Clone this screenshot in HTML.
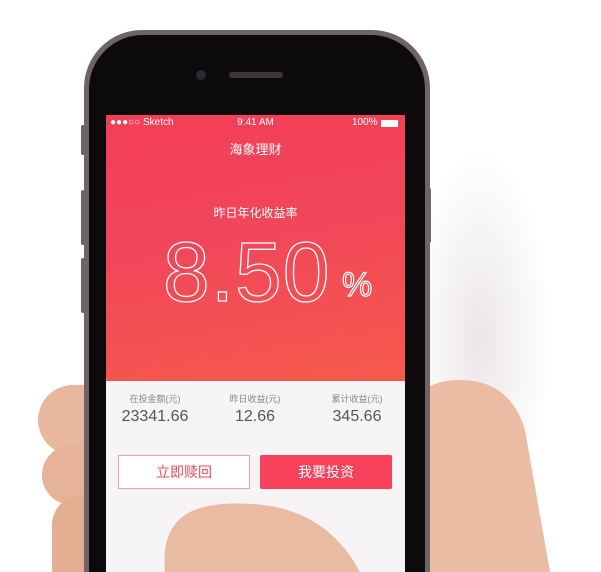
<!DOCTYPE html>
<html><head><meta charset="utf-8"><style>
*{margin:0;padding:0;box-sizing:border-box}
html,body{width:601px;height:572px;overflow:hidden}
body{background:#fff;font-family:"Liberation Sans","Noto Sans CJK SC",sans-serif}
#w{position:relative;width:601px;height:572px;overflow:hidden}
.abs{position:absolute}
.cn{font-family:"Liberation Sans","Noto Sans CJK SC",sans-serif}
</style></head><body><div id="w">
<div class="abs" style="left:420px;top:150px;width:181px;height:380px;background:radial-gradient(ellipse 70px 190px at 60px 190px,#ebe6e8,#fff)"></div>
<div class="abs" style="left:38px;top:385px;width:100px;height:70px;border-radius:35px;background:#e8b79e"></div>
<div class="abs" style="left:42px;top:445px;width:95px;height:60px;border-radius:30px;background:#e6b399"></div>
<div class="abs" style="left:52px;top:495px;width:90px;height:77px;border-radius:30px 30px 0 0;background:#e4ae93"></div>
<svg class="abs" style="left:400px;top:370px" width="160" height="202"><path d="M10 202 L10 40 Q20 10 60 10 Q110 10 125 60 L150 202 Z" fill="#ebbca3"/></svg>
<div class="abs" style="left:84px;top:30px;width:346px;height:542px;border-radius:58px 58px 0 0;background:#6e6468"></div>
<div class="abs" style="left:89px;top:35px;width:336px;height:537px;border-radius:54px 54px 0 0;background:#0c0a0b"></div>
<div class="abs" style="left:81px;top:125px;width:4px;height:30px;background:#6e6468;border-radius:2px"></div>
<div class="abs" style="left:81px;top:190px;width:4px;height:55px;background:#6e6468;border-radius:2px"></div>
<div class="abs" style="left:81px;top:258px;width:4px;height:55px;background:#6e6468;border-radius:2px"></div>
<div class="abs" style="left:427px;top:188px;width:4px;height:55px;background:#6e6468;border-radius:2px"></div>
<div class="abs" style="left:196px;top:70px;width:10px;height:10px;border-radius:50%;background:#2a2a35"></div>
<div class="abs" style="left:229px;top:72px;width:54px;height:6px;border-radius:3px;background:#3a3638"></div>
<div class="abs" style="left:106px;top:115px;width:299px;height:266px;background:linear-gradient(170deg,#f33e58 0%,#f2465a 45%,#f65a4c 100%)"></div>
<div class="abs" style="left:106px;top:381px;width:299px;height:191px;background:#f6f4f5"></div>
<div class="abs" style="left:110px;top:117px;font-size:10px;color:#fff">●●●○○ Sketch</div>
<div class="abs" style="left:106px;top:117px;width:299px;text-align:center;font-size:10px;color:#fff">9:41 AM</div>
<div class="abs" style="left:352px;top:117px;font-size:10px;color:#fff">100%</div>
<div class="abs" style="left:381px;top:120px;width:17px;height:7px;background:#fff"></div>
<div class="abs cn" style="left:106px;top:139px;width:299px;text-align:center;font-size:13px;color:#fff">海象理财</div>
<div class="abs cn" style="left:106px;top:204px;width:299px;text-align:center;font-size:12px;color:#fff">昨日年化收益率</div>
<div class="abs" style="left:163px;top:230px;font-size:84px;color:transparent;-webkit-text-stroke:1.3px #fff;letter-spacing:1px;line-height:1">8.50</div>
<div class="abs" style="left:342px;top:266px;font-size:34px;color:transparent;-webkit-text-stroke:1.2px #fff">%</div>
<div class="abs cn" style="left:110px;top:392px;width:90px;text-align:center;font-size:9px;color:#888;line-height:14px">在投金额(元)</div>
<div class="abs cn" style="left:210px;top:392px;width:90px;text-align:center;font-size:9px;color:#888;line-height:14px">昨日收益(元)</div>
<div class="abs cn" style="left:312px;top:392px;width:90px;text-align:center;font-size:9px;color:#888;line-height:14px">累计收益(元)</div>
<div class="abs" style="left:110px;top:408px;width:90px;text-align:center;font-size:16px;color:#555">23341.66</div>
<div class="abs" style="left:210px;top:408px;width:90px;text-align:center;font-size:16px;color:#555">12.66</div>
<div class="abs" style="left:312px;top:408px;width:90px;text-align:center;font-size:16px;color:#555">345.66</div>
<div class="abs cn" style="left:118px;top:455px;width:132px;height:34px;border:1px solid #f5a0aa;background:#fff;color:#f2475c;font-size:14px;text-align:center;line-height:32px">立即赎回</div>
<div class="abs cn" style="left:260px;top:455px;width:132px;height:34px;background:#f8415a;color:#fff;font-size:14px;text-align:center;line-height:34px;border-radius:2px">我要投资</div>
<svg class="abs" style="left:160px;top:500px" width="210" height="72"><path d="M5 72 Q0 20 40 8 Q70 0 110 6 Q170 16 200 72 Z" fill="#eabba3"/></svg>
</div></body></html>
